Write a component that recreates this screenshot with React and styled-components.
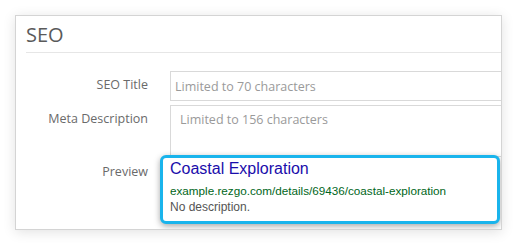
import React from "react";
import styled, { createGlobalStyle } from "styled-components";

const Global = createGlobalStyle`
  html, body { margin: 0; padding: 0; background: #ffffff; }
  body { font-family: "Open Sans", "Liberation Sans", sans-serif; }
  * { box-sizing: border-box; }
`;

const Page = styled.div`
  width: 517px;
  height: 245px;
  padding: 15px 0 0 15px;
  background: #fff;
`;

const Panel = styled.section`
  width: 487px;
  height: 215px;
  background: #fff;
  border: 1px solid #d4d4d4;
  box-shadow: 0 2px 12px rgba(0, 0, 0, 0.12);
  overflow: hidden;
  padding: 0 0 0 10px;
`;

const Heading = styled.h2`
  margin: 0 0 18px 0;
  padding: 9px 0 7px 0;
  font-size: 20px;
  line-height: 20px;
  font-weight: 400;
  color: #5a5a5a;
  border-bottom: 1px solid #e6e6e6;
`;

const Row = styled.div`
  display: grid;
  grid-template-columns: 144px 1fr;
  align-items: start;
  margin-bottom: ${(p) => p.$gap || 0}px;
`;

const Label = styled.label`
  padding-right: 22px;
  padding-top: ${(p) => p.$top || 0}px;
  text-align: right;
  font-size: 12.5px;
  line-height: 18px;
  color: #6a6a6a;
  white-space: nowrap;
`;

const Input = styled.input`
  width: 345px;
  height: 30px;
  border: 1px solid #d9d9d9;
  border-radius: 0;
  padding: 0 4px;
  font-family: "Open Sans", sans-serif;
  font-size: 12.5px;
  color: #555;
  outline: none;
  &::placeholder { color: #9a9a9a; }
`;

const TextArea = styled.textarea`
  display: block;
  width: 345px;
  height: 52px;
  border: 1px solid #d9d9d9;
  border-radius: 0;
  padding: 5px 9px;
  font-family: "Open Sans", sans-serif;
  font-size: 12.5px;
  line-height: 18px;
  resize: none;
  outline: none;
  &::placeholder { color: #9a9a9a; }
`;

const PreviewBox = styled.div`
  position: relative;
  margin-left: -10px;
  margin-top: -2px;
  width: 340px;
  height: 69px;
  border: 3px solid #19b4ec;
  border-radius: 6px;
  background: #fff;
  box-shadow: 0 2px 6px rgba(0, 0, 0, 0.35);
  padding: 1px 7px;
  font-family: "Liberation Sans", Arial, sans-serif;
`;

const PTitle = styled.div`
  font-size: 16px;
  line-height: 20px;
  color: #1a0dab;
`;

const PUrl = styled.div`
  margin-top: 3px;
  font-size: 11.7px;
  line-height: 17px;
  color: #006621;
`;

const PDesc = styled.div`
  font-size: 12px;
  line-height: 17px;
  color: #545454;
`;

export default function App() {
  return (
    <>
      <Global />
      <Page>
        <Panel>
          <Heading>SEO</Heading>
          <Row $gap={4}>
            <Label $top={5}>SEO Title</Label>
            <Input placeholder="Limited to 70 characters" />
          </Row>
          <Row>
            <Label $top={5}>Meta Description</Label>
            <TextArea placeholder="Limited to 156 characters" />
          </Row>
          <Row>
            <Label $top={6}>Preview</Label>
            <PreviewBox>
              <PTitle>Coastal Exploration</PTitle>
              <PUrl>example.rezgo.com/details/69436/coastal-exploration</PUrl>
              <PDesc>No description.</PDesc>
            </PreviewBox>
          </Row>
        </Panel>
      </Page>
    </>
  );
}
